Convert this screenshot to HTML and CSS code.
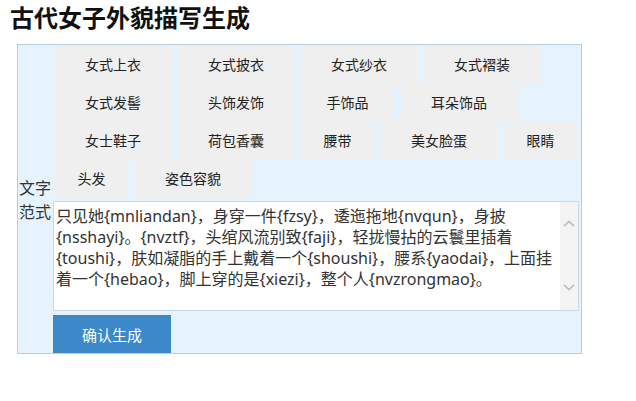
FILE: index.html
```html
<!DOCTYPE html>
<html lang="zh-CN">
<head>
<meta charset="utf-8">
<title>古代女子外貌描写生成</title>
<link rel="stylesheet" href="styles.css">
</head>
<body>
<h1 class="title">古代女子外貌描写生成</h1>
<div class="panel">
  <div class="tags">
    <span class="tag w4">女式上衣</span>
    <span class="tag w4">女式披衣</span>
    <span class="tag w4">女式纱衣</span>
    <span class="tag w4">女式褶装</span>
    <span class="tag w4">女式发髻</span>
    <span class="tag w4">头饰发饰</span>
    <span class="tag w3">手饰品</span>
    <span class="tag w4">耳朵饰品</span>
    <span class="tag w4">女士鞋子</span>
    <span class="tag w4">荷包香囊</span>
    <span class="tag w2">腰带</span>
    <span class="tag w4">美女脸蛋</span>
    <span class="tag w2">眼睛</span>
    <span class="tag w2">头发</span>
    <span class="tag w4">姿色容貌</span>
  </div>
  <label class="label" for="tpl">文字范式</label>
  <div class="editor">
    <textarea id="tpl" class="text">只见她{mnliandan}，身穿一件{fzsy}，逶迤拖地{nvqun}，身披{nsshayi}。{nvztf}，头绾风流别致{faji}，轻拢慢拈的云鬟里插着{toushi}，肤如凝脂的手上戴着一个{shoushi}，腰系{yaodai}，上面挂着一个{hebao}，脚上穿的是{xiezi}，整个人{nvzrongmao}。</textarea>
    <div class="scrollbar">
      <svg class="arrow up" width="12" height="7" viewBox="0 0 12 7"><path d="M1 6.2 L6 1.4 L11 6.2" fill="none" stroke="#bdbdbd" stroke-width="1.6"/></svg>
      <svg class="arrow down" width="12" height="7" viewBox="0 0 12 7"><path d="M1 0.8 L6 5.6 L11 0.8" fill="none" stroke="#bdbdbd" stroke-width="1.6"/></svg>
    </div>
  </div>
  <button class="submit" type="button">确认生成</button>
</div>
</body>
</html>
```
FILE: styles.css
```css
html, body {
  margin: 0;
  padding: 0;
  background: #ffffff;
}
body {
  font-family: "Noto Sans", "Noto Sans CJK SC", sans-serif;
  color: #222;
}
.title {
  margin: 0;
  padding-left: 10px;
  font-family: "Noto Sans CJK SC", sans-serif;
  font-size: 24px;
  font-weight: 700;
  line-height: 34px;
  color: #111;
}
.panel {
  box-sizing: border-box;
  width: 565px;
  margin: 10px 0 0 17px;
  border: 1px solid #b7cfe1;
  background: #e7f3fc;
  display: grid;
  grid-template-columns: 35px 1fr;
  padding: 0 1px 0 0;
}
.tags {
  grid-column: 2;
  grid-row: 1;
  display: flex;
  flex-wrap: wrap;
  column-gap: 7px;
  row-gap: 0;
  margin-left: 2px;
}
.tag {
  box-sizing: border-box;
  height: 38px;
  line-height: 38px;
  text-align: center;
  background: #efefef;
  font-family: "Noto Sans CJK SC", sans-serif;
  font-size: 14px;
  color: #222;
}
.w2 { width: 73px; }
.w3 { width: 93px; }
.w4 { width: 116px; }
.label {
  grid-column: 1;
  grid-row: 2;
  align-self: start;
  margin-top: -22px;
  padding-left: 1px;
  font-family: "Noto Sans CJK SC", sans-serif;
  font-size: 16px;
  line-height: 24px;
  color: #333;
}
.editor {
  grid-column: 2;
  grid-row: 2;
  margin-top: 4px;
  margin-right: 1px;
  height: 110px;
  box-sizing: border-box;
  border: 1px solid #c9dae7;
  background: #fff;
  display: flex;
}
.text {
  flex: 1;
  border: 0;
  outline: 0;
  resize: none;
  overflow: hidden;
  margin: 0;
  padding: 4px 2px 0 2px;
  font-family: "Noto Sans", "Noto Sans CJK SC", sans-serif;
  font-size: 16px;
  line-height: 21px;
  color: #333;
  background: #fff;
}
.scrollbar {
  width: 18px;
  background: #f4f4f4;
  display: flex;
  flex-direction: column;
  justify-content: space-between;
  align-items: center;
}
.arrow {
  display: block;
  flex: none;
}
.up {
  margin-top: 18px;
}
.down {
  margin-bottom: 19px;
}
.submit {
  grid-column: 2;
  grid-row: 3;
  justify-self: start;
  width: 118px;
  height: 38px;
  margin: 4px 0 0 0;
  border: 0;
  padding: 0;
  background: #3d88c8;
  color: #fff;
  font-family: "Noto Sans CJK SC", sans-serif;
  font-size: 15px;
}
```
